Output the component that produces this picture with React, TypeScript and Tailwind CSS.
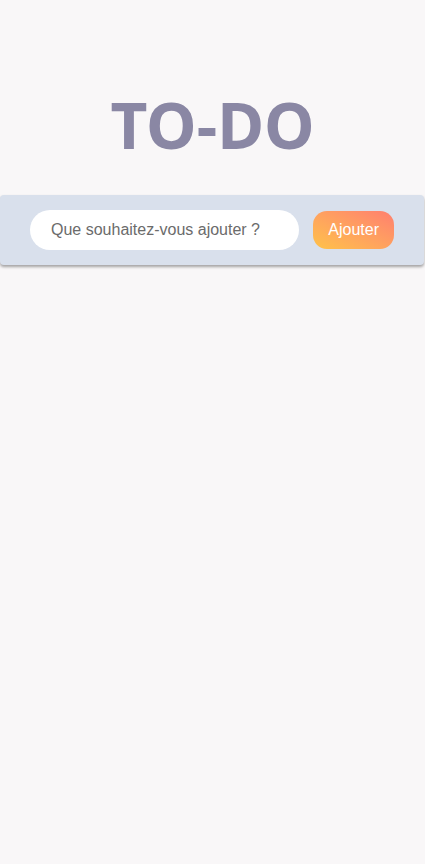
export default function App() {
  return (
    <div className="min-h-[864px] w-full bg-[#f9f7f8]" style={{ fontFamily: '"Liberation Sans", Arial, sans-serif' }}>
      <div className="flex flex-col items-stretch pt-[86px]">
        <h1 className="text-center text-[64px] font-bold leading-[77px] text-[#8a87a4]" style={{ fontFamily: '"Noto Sans", "Open Sans", sans-serif' }}>
          TO-DO
        </h1>
        <div className="mt-[32px] flex h-[70px] items-center rounded-[4px] bg-[#d9e0ec] pl-[30px] pr-[30px] shadow-[0_2px_3px_rgba(0,0,0,0.35)] w-[424px]">
          <input
            type="text"
            placeholder="Que souhaitez-vous ajouter ?"
            className="h-[40px] w-[270px] rounded-full bg-white pl-[21px] text-[16px] text-[#555] placeholder:text-[#6b6b6b] outline-none"
          />
          <button className="ml-[14px] h-[38px] w-[81px] rounded-[14px] bg-gradient-to-tr from-[#ffc247] to-[#ff7e6e] text-[16px] text-white">
            Ajouter
          </button>
        </div>
      </div>
    </div>
  );
}
